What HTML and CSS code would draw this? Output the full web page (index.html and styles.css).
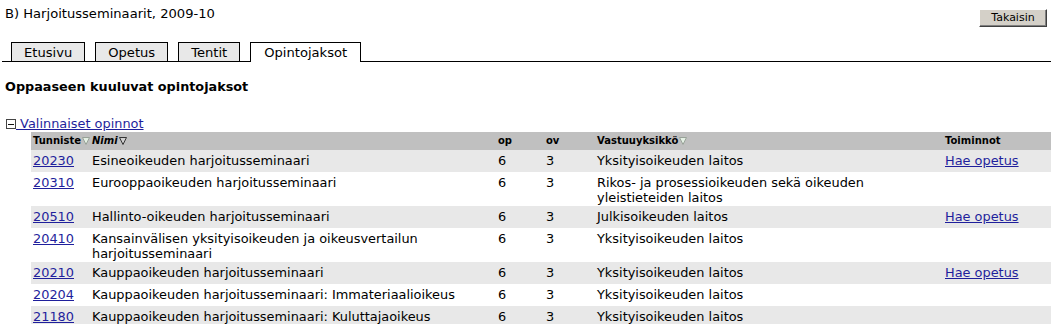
FILE: index.html
```html
<!DOCTYPE html>
<html lang="fi">
<head>
<meta charset="utf-8">
<title>Opintojaksot</title>
<link rel="stylesheet" href="styles.css">
</head>
<body>
<div class="page">
  <div class="titlebar">
    <div class="title">B) Harjoitusseminaarit, 2009-10</div>
    <button class="back" type="button">Takaisin</button>
  </div>
  <div class="tabs">
    <span class="tab">Etusivu</span>
    <span class="tab">Opetus</span>
    <span class="tab">Tentit</span>
    <span class="tab active">Opintojaksot</span>
  </div>
  <h1 class="heading">Oppaaseen kuuluvat opintojaksot</h1>
  <a class="group" href="#"><svg class="toggle" width="10" height="10" viewBox="0 0 10 10"><rect x="0.5" y="0.5" width="9" height="9" fill="#fff" stroke="#444"/><path d="M2 5.5 H8" stroke="#111"/></svg> Valinnaiset opinnot</a>
  <div class="section">
    <table class="courses">
      <colgroup>
        <col class="c-id"><col class="c-name"><col class="c-op"><col class="c-ov"><col class="c-unit"><col class="c-act">
      </colgroup>
      <thead>
        <tr>
          <th>Tunniste<svg class="sort" width="8" height="8" viewBox="0 0 8 8"><path d="M0.5 0.5 H7.5 L4 7.5 Z" fill="#e4f0e4" stroke="#98a298"/></svg></th>
          <th><i>Nimi</i><svg class="sort" width="8" height="8" viewBox="0 0 8 8"><path d="M0.5 0.5 H7.5 L4 7.5 Z" fill="#cfcfcf" stroke="#333"/></svg></th>
          <th>op</th>
          <th>ov</th>
          <th>Vastuuyksikkö<svg class="sort" width="8" height="8" viewBox="0 0 8 8"><path d="M0.5 0.5 H7.5 L4 7.5 Z" fill="#e4f0e4" stroke="#98a298"/></svg></th>
          <th>Toiminnot</th>
        </tr>
      </thead>
      <tbody>
        <tr><td><a href="#">20230</a></td><td>Esineoikeuden harjoitusseminaari</td><td>6</td><td>3</td><td>Yksityisoikeuden laitos</td><td><a href="#">Hae opetus</a></td></tr>
        <tr><td><a href="#">20310</a></td><td>Eurooppaoikeuden harjoitusseminaari</td><td>6</td><td>3</td><td>Rikos- ja prosessioikeuden sekä oikeuden yleistieteiden laitos</td><td></td></tr>
        <tr><td><a href="#">20510</a></td><td>Hallinto-oikeuden harjoitusseminaari</td><td>6</td><td>3</td><td>Julkisoikeuden laitos</td><td><a href="#">Hae opetus</a></td></tr>
        <tr><td><a href="#">20410</a></td><td>Kansainvälisen yksityisoikeuden ja oikeusvertailun harjoitusseminaari</td><td>6</td><td>3</td><td>Yksityisoikeuden laitos</td><td></td></tr>
        <tr><td><a href="#">20210</a></td><td>Kauppaoikeuden harjoitusseminaari</td><td>6</td><td>3</td><td>Yksityisoikeuden laitos</td><td><a href="#">Hae opetus</a></td></tr>
        <tr><td><a href="#">20204</a></td><td>Kauppaoikeuden harjoitusseminaari: Immateriaalioikeus</td><td>6</td><td>3</td><td>Yksityisoikeuden laitos</td><td></td></tr>
        <tr><td><a href="#">21180</a></td><td>Kauppaoikeuden harjoitusseminaari: Kuluttajaoikeus</td><td>6</td><td>3</td><td>Yksityisoikeuden laitos</td><td></td></tr>
      </tbody>
    </table>
  </div>
</div>
</body>
</html>
```

FILE: styles.css
```css
html, body {
  margin: 0;
  padding: 0;
  background: #fff;
}

body {
  font-family: "DejaVu Sans", Verdana, sans-serif;
  font-size: 12.9px;
  line-height: 16px;
  color: #000;
}

a {
  color: #1f1f9c;
  text-decoration: underline;
}

.page {
  padding-left: 5px;
}

.titlebar {
  box-sizing: border-box;
  height: 42px;
  padding: 6px 4px 0 0;
  display: flex;
  justify-content: space-between;
  align-items: flex-start;
}

.title {
  font-size: 13.1px;
}

.back {
  margin-top: 3px;
  width: 68px;
  height: 18px;
  padding: 0;
  font-family: "DejaVu Sans", Verdana, sans-serif;
  font-size: 11px;
  line-height: 14px;
  color: #000;
  background: #d4d0c8;
  border: 1px solid;
  border-color: #fff #404040 #404040 #fff;
  box-shadow: inset -1px -1px 0 #808080;
}

.tabs {
  display: flex;
  align-items: flex-end;
  gap: 10px;
  margin-left: -3px;
  padding-left: 9px;
  border-bottom: 1px solid #000;
  font-size: 13.1px;
}

.tab {
  padding: 2px 12px 0 12px;
  border: 1px solid #000;
  border-bottom: none;
  background: #e8e8e8;
}

.tab.active {
  background: #fff;
  padding: 2px 13px 1px 13px;
  margin-bottom: -1px;
}

.heading {
  margin: 17px 0 0;
  font-size: 12.8px;
  font-weight: bold;
  line-height: 16px;
}

.group {
  display: inline-block;
  margin-top: 21px;
  padding-left: 1px;
}

.toggle {
  vertical-align: -1px;
}

.section {
  padding-left: 26px;
}

.courses {
  width: 100%;
  table-layout: fixed;
  border-collapse: collapse;
}

.c-id { width: 59px; }
.c-name { width: 406px; }
.c-op { width: 48px; }
.c-ov { width: 51px; }
.c-unit { width: 348px; }
.c-act { width: 108px; }

.courses th {
  height: 18px;
  padding: 0 0 0 2px;
  background: #c0c0c0;
  font-size: 10px;
  line-height: 12px;
  font-weight: bold;
  text-align: left;
  vertical-align: middle;
  white-space: nowrap;
}

.courses th .sort {
  vertical-align: -1px;
  margin-left: 1px;
}

.courses td {
  height: 22px;
  box-sizing: border-box;
  padding: 3px 2px 1px 2px;
  line-height: 15px;
  vertical-align: top;
}

.courses tbody tr:nth-child(odd) td {
  background: #e8e8e8;
}
```
